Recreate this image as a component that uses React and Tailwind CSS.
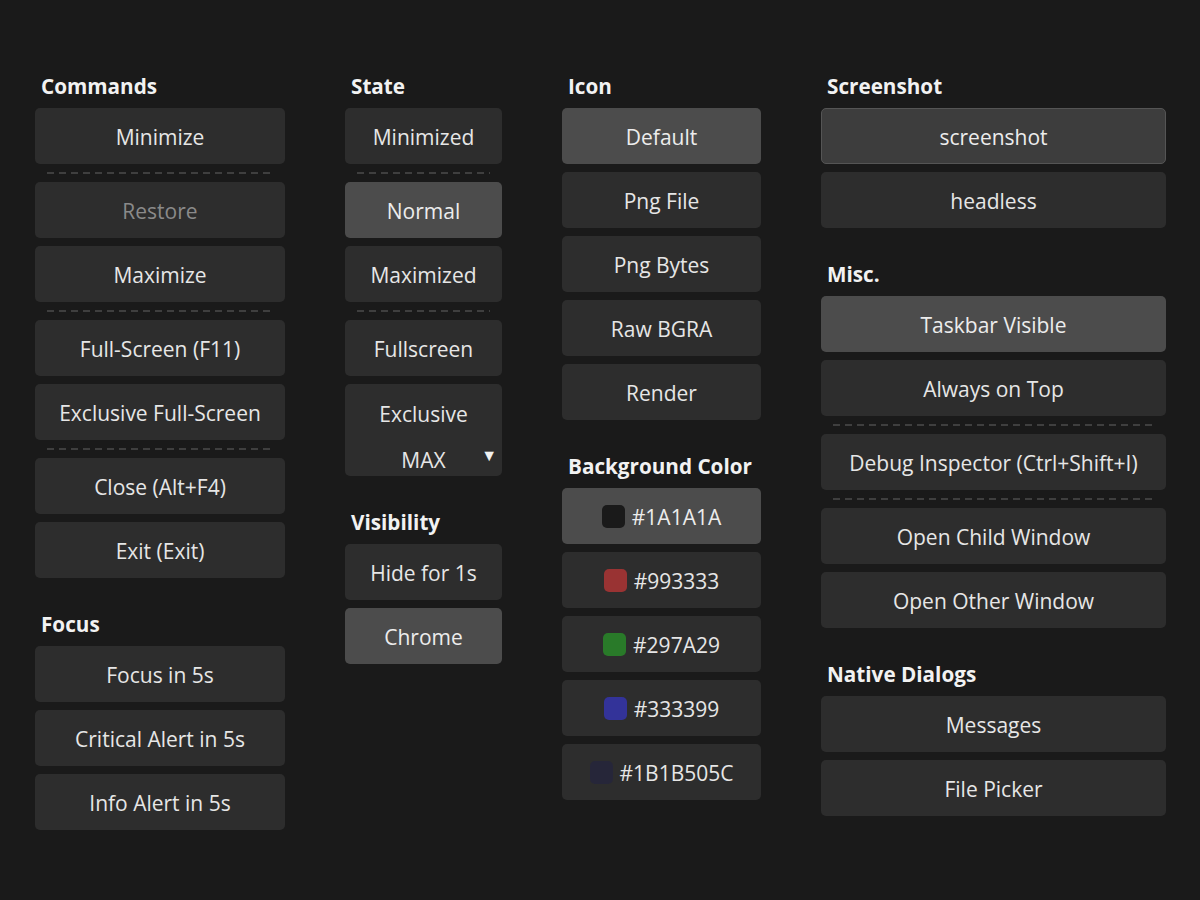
import React from 'react';

const font = { fontFamily: '"Open Sans", "Noto Sans", sans-serif' };

const Header = ({ children, first }) => (
    <div className={`${first ? '' : 'mt-8'} mb-2 pl-[6px] h-[28px] text-[20.7px] leading-[28px] font-bold text-[#f2f2f2]`}>{children}</div>
);

const Sep = () => (
    <div className="mx-3 h-[2px] bg-[linear-gradient(to_right,#3f3f3f_58%,transparent_0)] bg-[length:12px_2px]" />
);

const Btn = ({ children, active, disabled, outlined }) => {
    let cls = 'bg-[#2d2d2d] text-[#e6e6e6]';
    if (active) cls = 'bg-[#4c4c4c] text-[#ececec]';
    if (disabled) cls = 'bg-[#2d2d2d] text-[#8a8a8a]';
    if (outlined) cls = 'bg-[#3d3d3d] text-[#ececec] border border-[#555555]';
    return (
        <div className={`h-14 pt-[3px] rounded-[5px] flex items-center justify-center text-[21px] ${cls}`}>{children}</div>
    );
};

const Swatch = ({ color, label, active }) => (
    <Btn active={active}>
        <span className="w-[23px] h-[23px] -mt-[2px] rounded-[5px] mr-[7px]" style={{ background: color }} />
        {label}
    </Btn>
);

export default function App() {
    return (
        <div className="min-h-[900px] w-full bg-[#1a1a1a] select-none" style={font}>
            <div className="flex gap-[60px] pl-[35px] pt-[72px]">
                {/* column 1 */}
                <div className="w-[250px] flex flex-col">
                    <Header first>Commands</Header>
                    <div className="flex flex-col gap-2">
                        <Btn>Minimize</Btn>
                        <Sep />
                        <Btn disabled>Restore</Btn>
                        <Btn>Maximize</Btn>
                        <Sep />
                        <Btn>Full-Screen (F11)</Btn>
                        <Btn>Exclusive Full-Screen</Btn>
                        <Sep />
                        <Btn>Close (Alt+F4)</Btn>
                        <Btn>Exit (Exit)</Btn>
                    </div>
                    <Header>Focus</Header>
                    <div className="flex flex-col gap-2">
                        <Btn>Focus in 5s</Btn>
                        <Btn>Critical Alert in 5s</Btn>
                        <Btn>Info Alert in 5s</Btn>
                    </div>
                </div>

                {/* column 2 */}
                <div className="w-[157px] flex flex-col">
                    <Header first>State</Header>
                    <div className="flex flex-col gap-2">
                        <Btn>Minimized</Btn>
                        <Sep />
                        <Btn active>Normal</Btn>
                        <Btn>Maximized</Btn>
                        <Sep />
                        <Btn>Fullscreen</Btn>
                        <div className="relative h-[92px] rounded-[5px] bg-[#2d2d2d] text-[21px] text-[#e6e6e6] flex flex-col items-center pt-[15px]">
                            <span className="leading-[30px]">Exclusive</span>
                            <span className="leading-[30px] mt-[16px]">MAX</span>
                            <span className="absolute right-[5px] bottom-[9px] text-[16px] text-[#f0f0f0]">▼</span>
                        </div>
                    </div>
                    <Header>Visibility</Header>
                    <div className="flex flex-col gap-2">
                        <Btn>Hide for 1s</Btn>
                        <Btn active>Chrome</Btn>
                    </div>
                </div>

                {/* column 3 */}
                <div className="w-[199px] flex flex-col">
                    <Header first>Icon</Header>
                    <div className="flex flex-col gap-2">
                        <Btn active>Default</Btn>
                        <Btn>Png File</Btn>
                        <Btn>Png Bytes</Btn>
                        <Btn>Raw BGRA</Btn>
                        <Btn>Render</Btn>
                    </div>
                    <Header>Background Color</Header>
                    <div className="flex flex-col gap-2">
                        <Swatch active color="#1A1A1A" label="#1A1A1A" />
                        <Swatch color="#993333" label="#993333" />
                        <Swatch color="#297A29" label="#297A29" />
                        <Swatch color="#333399" label="#333399" />
                        <Swatch color="#1B1B505C" label="#1B1B505C" />
                    </div>
                </div>

                {/* column 4 */}
                <div className="w-[345px] flex flex-col">
                    <Header first>Screenshot</Header>
                    <div className="flex flex-col gap-2">
                        <Btn outlined>screenshot</Btn>
                        <Btn>headless</Btn>
                    </div>
                    <Header>Misc.</Header>
                    <div className="flex flex-col gap-2">
                        <Btn active>Taskbar Visible</Btn>
                        <Btn>Always on Top</Btn>
                        <Sep />
                        <Btn>Debug Inspector (Ctrl+Shift+I)</Btn>
                        <Sep />
                        <Btn>Open Child Window</Btn>
                        <Btn>Open Other Window</Btn>
                    </div>
                    <Header>Native Dialogs</Header>
                    <div className="flex flex-col gap-2">
                        <Btn>Messages</Btn>
                        <Btn>File Picker</Btn>
                    </div>
                </div>
            </div>
        </div>
    );
}
